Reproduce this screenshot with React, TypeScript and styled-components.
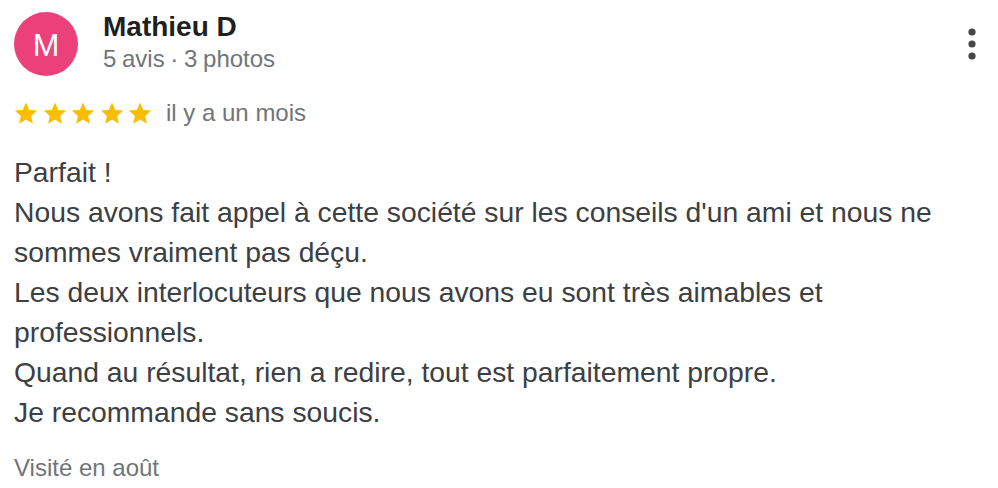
import React from "react";
import styled, { createGlobalStyle } from "styled-components";

const GlobalStyle = createGlobalStyle`
  html, body {
    margin: 0;
    padding: 0;
    background: #ffffff;
  }
  body {
    font-family: "Liberation Sans", Arial, Helvetica, sans-serif;
  }
`;

const Card = styled.article`
  width: 998px;
  box-sizing: border-box;
  padding: 11px 14px 0 14px;
  font-family: "Liberation Sans", Arial, Helvetica, sans-serif;
`;

const Header = styled.header`
  display: flex;
  align-items: flex-start;
`;

const Avatar = styled.div`
  flex: 0 0 64px;
  width: 64px;
  height: 64px;
  margin-top: 1px;
  border-radius: 50%;
  background: #ec407a;
  color: #ffffff;
  display: flex;
  align-items: center;
  justify-content: center;
  font-size: 32px;
  line-height: 1;
  padding-top: 1px;
  box-sizing: border-box;
`;

const Identity = styled.div`
  display: flex;
  flex-direction: column;
  margin-left: 25px;
`;

const Name = styled.div`
  font-size: 28px;
  line-height: 32px;
  font-weight: 700;
  color: #1f1f1f;
`;

const Meta = styled.div`
  font-size: 24px;
  line-height: 32px;
  color: #70757a;
  word-spacing: -1px;
`;

const MenuButton = styled.button`
  margin-left: auto;
  margin-top: 15px;
  width: 24px;
  height: 36px;
  padding: 0;
  border: none;
  background: transparent;
  display: flex;
  align-items: center;
  justify-content: center;
  color: #444746;
  cursor: pointer;
`;

const RatingRow = styled.div`
  display: flex;
  align-items: center;
  margin-top: 21px;
  height: 32px;
`;

const Stars = styled.div`
  display: flex;
  gap: 4.5px;
`;

const When = styled.span`
  margin-left: 14px;
  font-size: 24px;
  line-height: 32px;
  color: #70757a;
`;

const Body = styled.p`
  margin: 23px 0 0 0;
  padding-right: 10px;
  font-size: 28.3px;
  line-height: 40px;
  color: #3c4043;
  white-space: pre-line;
`;

const Visit = styled.div`
  margin-top: 20px;
  font-size: 24px;
  line-height: 32px;
  color: #70757a;
`;

const Star: React.FC = () => (
  <svg width="24" height="23" viewBox="0 0 24 23" aria-hidden="true">
    <path
      d="M12 0.6l3.2 7.3 7.9 0.7-6 5.3 1.8 7.8L12 17.6l-6.9 4.1 1.8-7.8-6-5.3 7.9-0.7z"
      fill="#fbbc04"
    />
  </svg>
);

const MoreIcon: React.FC = () => (
  <svg width="8" height="32" viewBox="0 0 8 32" aria-hidden="true">
    <circle cx="4" cy="4" r="3.6" fill="currentColor" />
    <circle cx="4" cy="16" r="3.6" fill="currentColor" />
    <circle cx="4" cy="28" r="3.6" fill="currentColor" />
  </svg>
);

const reviewText = `Parfait !
Nous avons fait appel à cette société sur les conseils d'un ami et nous ne sommes vraiment pas déçu.
Les deux interlocuteurs que nous avons eu sont très aimables et professionnels.
Quand au résultat, rien a redire, tout est parfaitement propre.
Je recommande sans soucis.`;

export default function App() {
  return (
    <>
      <GlobalStyle />
      <Card>
        <Header>
          <Avatar>M</Avatar>
          <Identity>
            <Name>Mathieu D</Name>
            <Meta>5 avis · 3 photos</Meta>
          </Identity>
          <MenuButton aria-label="Plus d'options">
            <MoreIcon />
          </MenuButton>
        </Header>
        <RatingRow>
          <Stars>
            {[0, 1, 2, 3, 4].map((i) => (
              <Star key={i} />
            ))}
          </Stars>
          <When>il y a un mois</When>
        </RatingRow>
        <Body>{reviewText}</Body>
        <Visit>Visité en août</Visit>
      </Card>
    </>
  );
}
